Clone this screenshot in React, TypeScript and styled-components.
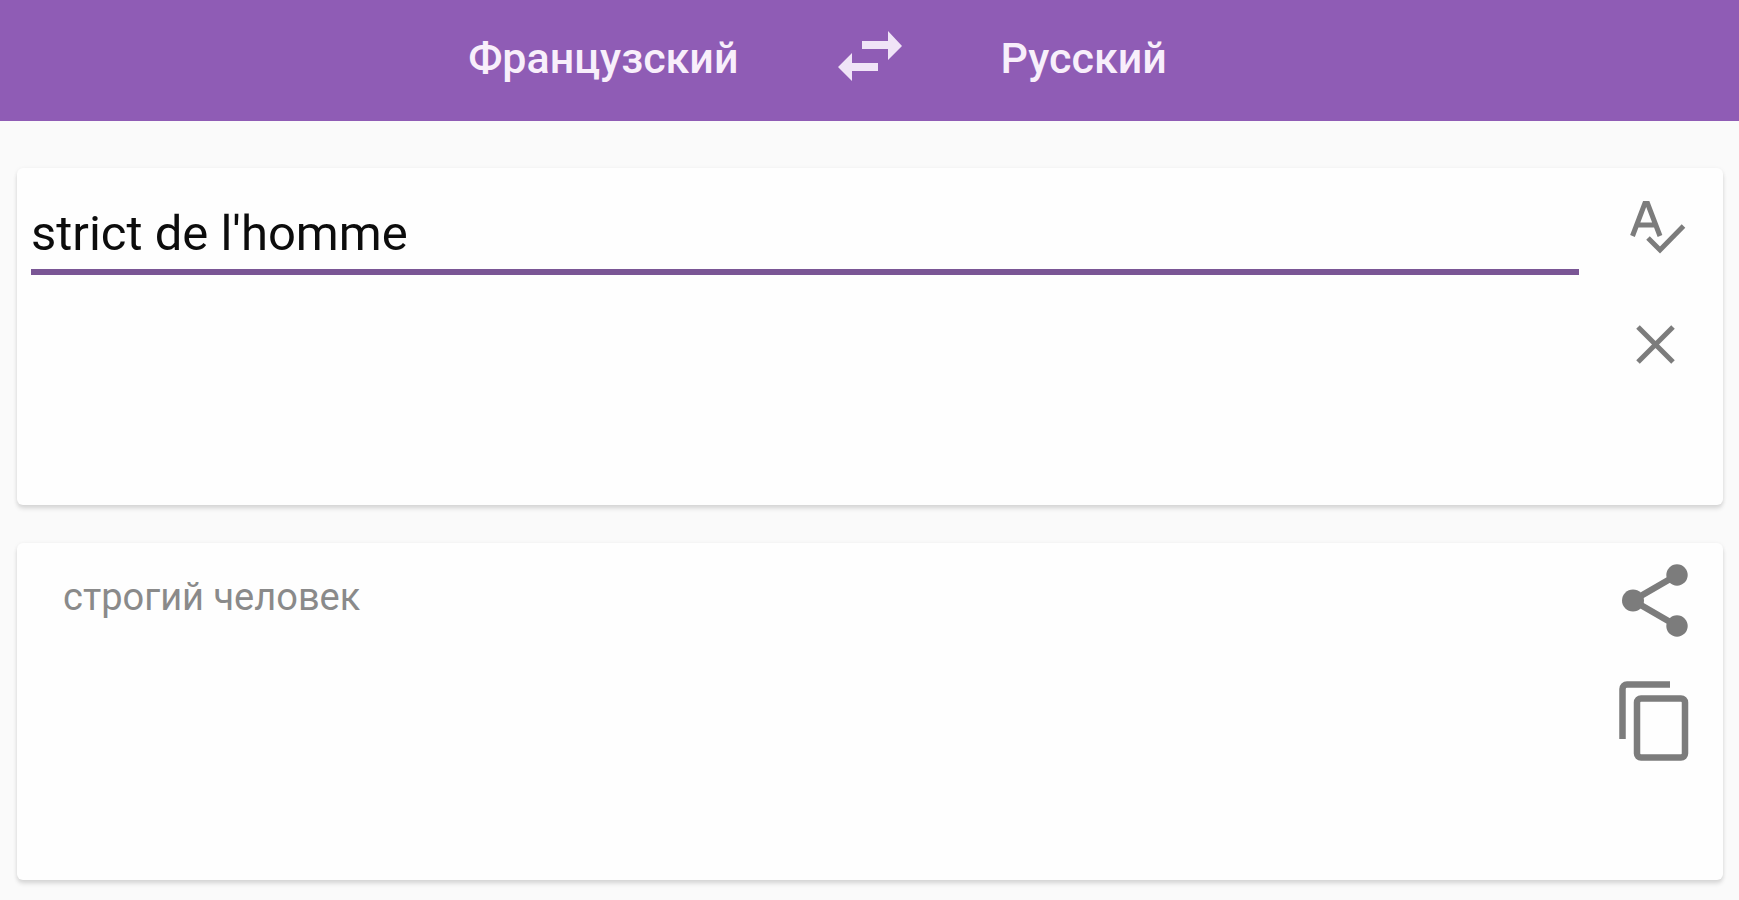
import React, { useState } from "react";
import styled, { createGlobalStyle } from "styled-components";

const GlobalStyle = createGlobalStyle`
  *, *::before, *::after { box-sizing: border-box; }
  body {
    margin: 0;
    background: #fafafa;
    font-family: Roboto, "Noto Sans", sans-serif;
  }
`;

const Header = styled.header`
  display: grid;
  grid-template-columns: 1fr auto 1fr;
  align-items: center;
  column-gap: 98px;
  padding: 26px 0 35px;
  background: #8f5cb5;
`;

const LanguageButton = styled.button<{ $side: "start" | "end" }>`
  justify-self: ${({ $side }) => $side};
  padding: 4px 0 0;
  border: 0;
  background: none;
  color: #f8effb;
  font: 500 43px/56px Roboto, "Noto Sans", sans-serif;
  cursor: pointer;
`;

const IconButton = styled.button`
  display: flex;
  padding: 0;
  border: 0;
  background: none;
  color: #7c7c7c;
  cursor: pointer;
`;

const SwapButton = styled(IconButton)`
  color: #f0e4f7;
`;

const Main = styled.main`
  display: flex;
  flex-direction: column;
  gap: 38px;
  padding: 47px 16px 20px 17px;
`;

const Card = styled.section`
  display: flex;
  justify-content: space-between;
  gap: 32px;
  min-height: 337px;
  padding: 15px 24px 15px 14px;
  border-radius: 6px;
  background: #fefefe;
  box-shadow: 0 4px 4px rgba(0, 0, 0, 0.1), 0 1px 4px rgba(0, 0, 0, 0.08);
`;

const Actions = styled.div`
  display: flex;
  flex-direction: column;
  gap: 30px;
`;

const Field = styled.input`
  flex: 1;
  align-self: flex-start;
  min-width: 0;
  margin-top: 19px;
  padding: 0 0 3px;
  border: 0;
  border-bottom: 6px solid #7a5695;
  border-radius: 0;
  outline: 0;
  background: transparent;
  color: #0c0c0c;
  font: 400 49px/64px Roboto, "Noto Sans", sans-serif;
`;

const Translation = styled.output`
  padding: 15px 0 0 32px;
  color: #8a8a8a;
  font: 400 38px/48px Roboto, "Noto Sans", sans-serif;
`;

const SwapIcon = () => (
  <svg width="66" height="52" viewBox="0 0 66 52" fill="currentColor" aria-hidden="true">
    <path d="M25 11h26V1l14 15-14 14V19H25z" />
    <path d="M41 33H15V23L1 37l14 14V41h26z" />
  </svg>
);

const SpellcheckIcon = () => (
  <svg width="88" height="88" viewBox="0 0 88 88" fill="none" stroke="currentColor" strokeWidth="5" aria-hidden="true">
    <path d="M21.5 53L33.8 20.5h2.8L49 53M26 42h19" />
    <path d="M37 55l12 12L72.5 43" />
  </svg>
);

const ClearIcon = () => (
  <svg width="88" height="88" viewBox="0 0 88 88" fill="none" stroke="currentColor" strokeWidth="5" aria-hidden="true">
    <path d="M27 26l35 35M62 26L27 61" />
  </svg>
);

const ShareIcon = () => (
  <svg width="88" height="88" viewBox="0 0 88 88" fill="currentColor" aria-hidden="true">
    <path d="M66 17L22 42.5 66 68" fill="none" stroke="currentColor" strokeWidth="6.5" />
    <circle cx="66" cy="17" r="10.7" />
    <circle cx="22" cy="42.5" r="11" />
    <circle cx="66" cy="68" r="10.7" />
  </svg>
);

const CopyIcon = () => (
  <svg width="88" height="88" viewBox="0 0 88 88" fill="none" stroke="currentColor" strokeWidth="6.5" aria-hidden="true">
    <path d="M59 8.5H16a4.5 4.5 0 0 0-4.5 4.5v50" />
    <rect x="26" y="22.5" width="48" height="59" rx="4" />
  </svg>
);

export default function App() {
  const [text, setText] = useState("strict de l'homme");
  return (
    <>
      <GlobalStyle />
      <Header>
        <LanguageButton $side="end" type="button">Французский</LanguageButton>
        <SwapButton type="button" aria-label="Поменять языки"><SwapIcon /></SwapButton>
        <LanguageButton $side="start" type="button">Русский</LanguageButton>
      </Header>
      <Main>
        <Card>
          <Field
            id="source"
            aria-label="Исходный текст"
            value={text}
            spellCheck={false}
            onChange={(e) => setText(e.target.value)}
          />
          <Actions>
            <IconButton type="button" aria-label="Проверить орфографию"><SpellcheckIcon /></IconButton>
            <IconButton type="button" aria-label="Очистить" onClick={() => setText("")}><ClearIcon /></IconButton>
          </Actions>
        </Card>
        <Card>
          <Translation htmlFor="source">строгий человек</Translation>
          <Actions>
            <IconButton type="button" aria-label="Поделиться"><ShareIcon /></IconButton>
            <IconButton type="button" aria-label="Копировать"><CopyIcon /></IconButton>
          </Actions>
        </Card>
      </Main>
    </>
  );
}
